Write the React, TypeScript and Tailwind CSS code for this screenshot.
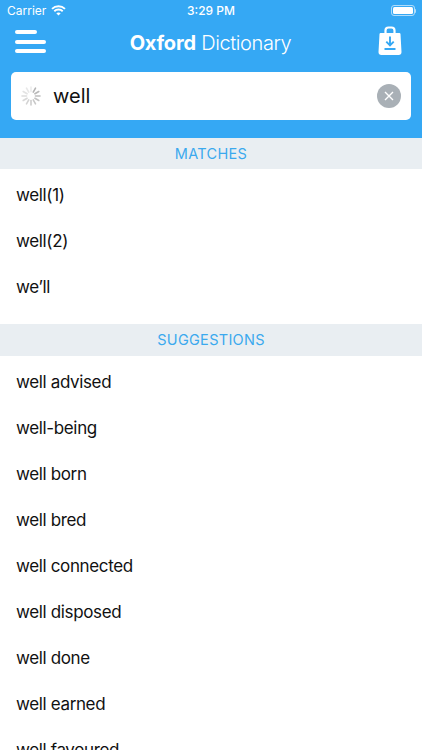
const MATCHES = ['well(1)', 'well(2)', 'we’ll']
const SUGGESTIONS = [
  'well advised',
  'well-being',
  'well born',
  'well bred',
  'well connected',
  'well disposed',
  'well done',
  'well earned',
  'well favoured',
]

function Wifi() {
  return (
    <svg width="15" height="11" viewBox="0 0 15 11" fill="none" stroke="white" strokeWidth="1.9">
      <path d="M1 3.9C4.6 .4 10.4 .4 14 3.9" />
      <path d="M3.3 6.2C5.6 4 9.4 4 11.7 6.2" />
      <path d="M7.5 10.6L5.3 8.3C6.5 7.3 8.5 7.3 9.7 8.3Z" fill="white" stroke="none" />
    </svg>
  )
}

function Battery() {
  return (
    <div className="flex items-center">
      <div className="w-[24px] h-[11px] rounded-[3px] border border-white/60 p-px">
        <div className="h-full w-full rounded-[1.5px] bg-white" />
      </div>
      <div className="w-px h-1 bg-white/60 rounded-r-sm" />
    </div>
  )
}

function Spinner() {
  const spokes = Array.from({ length: 12 }, (_, i) => i)
  return (
    <svg width="20" height="20" viewBox="0 0 20 20">
      {spokes.map((i) => (
        <line
          key={i}
          x1="10"
          y1="1"
          x2="10"
          y2="5.5"
          stroke="#b4b4b4"
          strokeWidth="1.6"
          strokeLinecap="round"
          opacity={1 - ((i + 12 - 1) % 12) * 0.07}
          transform={`rotate(${i * 30} 10 10)`}
        />
      ))}
    </svg>
  )
}

function BagIcon() {
  return (
    <svg width="24" height="30" viewBox="0 0 24 30" fill="none">
      <path d="M7.5 8V4.5C7.5 2.8 8.8 1.5 10.5 1.5H13.5C15.2 1.5 16.5 2.8 16.5 4.5V8" stroke="white" strokeWidth="2.2" />
      <path d="M2.5 7H21.5C22 7 22.4 7.4 22.5 7.9L23.5 26C23.6 27.7 22.3 29 20.7 29H3.3C1.7 29 .4 27.7 .5 26L1.5 7.9C1.6 7.4 2 7 2.5 7Z" fill="white" />
      <path d="M12 10.5V19M8.3 15.6L12 19.3L15.7 15.6" stroke="#35a8f4" strokeWidth="1.9" />
      <path d="M6.5 23H17.5" stroke="#35a8f4" strokeWidth="2" />
    </svg>
  )
}

function SectionHeader({ title }: { title: string }) {
  return (
    <div className="h-full bg-[#e9eef2] flex items-center justify-center text-[14.5px] text-[#3ba9ee] tracking-[0.3px]">
      {title}
    </div>
  )
}

function Row({ label }: { label: string }) {
  return <div className="h-[46px] shrink-0 flex items-center pl-4 text-[17px] tracking-[-0.36px] text-[#111]">{label}</div>
}

export default function App() {
  return (
    <div className="w-[422px] h-[750px] overflow-hidden bg-white font-['Inter',sans-serif]">
      <div className="h-[138px] bg-[#35a8f4] text-white">
        <div className="h-[21px] relative flex items-center justify-between pl-[7px] pr-[6px] text-[12px]">
          <div className="flex items-center gap-[5px]">
            <span>Carrier</span>
            <Wifi />
          </div>
          <span className="absolute left-0 right-0 text-center font-medium">3:29 PM</span>
          <Battery />
        </div>
        <div className="h-[44px] flex items-center justify-between pl-[15px] pr-5">
          <div className="flex flex-col gap-[5.5px] w-[31px] -mt-[3px]">
            <div className="h-1 w-[22px] rounded-full bg-white" />
            <div className="h-1 rounded-full bg-white" />
            <div className="h-1 rounded-full bg-white" />
          </div>
          <div className="text-[20px] tracking-[-0.2px] -ml-[3px]">
            <span className="font-bold">Oxford</span>{' '}
            <span className="font-light tracking-[-0.4px]">Dictionary</span>
          </div>
          <div className="-mt-[4px]">
            <BagIcon />
          </div>
        </div>
        <div className="mx-[11px] mt-[7px] h-[48px] rounded-[5px] bg-white flex items-center pl-[10px] pr-[10px]">
          <Spinner />
          <span className="ml-[12px] flex-1 text-[20px] text-[#111]">well</span>
          <div className="w-6 h-6 rounded-full bg-[#a9b0b6] flex items-center justify-center">
            <svg width="10" height="10" viewBox="0 0 10 10" stroke="white" strokeWidth="1.4">
              <path d="M1 1L9 9M9 1L1 9" />
            </svg>
          </div>
        </div>
      </div>
      <div className="h-[31px]">
        <SectionHeader title="MATCHES" />
      </div>
      <div className="h-[155px] pt-1">
        {MATCHES.map((m) => (
          <Row key={m} label={m} />
        ))}
      </div>
      <div className="h-[32px]">
        <SectionHeader title="SUGGESTIONS" />
      </div>
      <div className="pt-[3.5px]">
        {SUGGESTIONS.map((s) => (
          <Row key={s} label={s} />
        ))}
      </div>
    </div>
  )
}
